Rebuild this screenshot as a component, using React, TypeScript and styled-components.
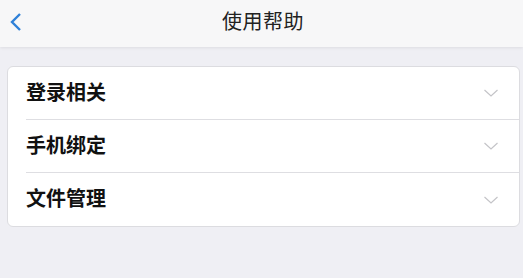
import React from 'react';
import styled, { createGlobalStyle } from 'styled-components';

const GlobalStyle = createGlobalStyle`
  html, body {
    margin: 0;
    padding: 0;
    background: #efeff4;
    font-family: "Noto Sans CJK SC", "Noto Sans", sans-serif;
  }
`;

const Page = styled.div`
  width: 523px;
  height: 278px;
  background: #efeff4;
  overflow: hidden;
`;

const NavBar = styled.div`
  position: relative;
  height: 47px;
  background: #f7f7f8;
  box-shadow: 0 1px 3px rgba(0, 0, 0, 0.08);
  display: flex;
  align-items: center;
  justify-content: center;
`;

const BackButton = styled.button`
  position: absolute;
  left: 6px;
  top: 11px;
  width: 20px;
  height: 22px;
  padding: 0;
  border: none;
  background: none;
  display: flex;
  align-items: center;
  justify-content: center;
`;

const Title = styled.h1`
  margin: 0;
  font-size: 20px;
  font-weight: 400;
  color: #222;
  letter-spacing: 0.5px;
  margin-top: -6px;
  margin-left: 3px;
`;

const Card = styled.div`
  margin: 19px 3px 0 7px;
  background: #fff;
  border: 1px solid #dcdce0;
  border-radius: 6px;
  overflow: hidden;
`;

const Row = styled.div<{ $last?: boolean }>`
  height: 52px;
  margin-left: 18px;
  padding-right: 20px;
  display: flex;
  align-items: center;
  justify-content: space-between;
  border-bottom: ${(p) => (p.$last ? 'none' : '1px solid #dedee2')};
  &:last-child {
    height: 53px;
  }
`;

const Label = styled.span`
  font-size: 20px;
  font-weight: 700;
  color: #111;
  margin-top: -4px;
`;

const Chevron = () => (
  <svg width="16" height="10" viewBox="0 0 16 10">
    <path d="M1.5 2 L8 8 L14.5 2" fill="none" stroke="#c4c4c8" strokeWidth="1.2" />
  </svg>
);

const items = ['登录相关', '手机绑定', '文件管理'];

const App: React.FC = () => {
  return (
    <Page>
      <GlobalStyle />
      <NavBar>
        <BackButton>
          <svg width="14" height="20" viewBox="0 0 14 20">
            <path d="M11 2 L3 10 L11 18" fill="none" stroke="#2f80d8" strokeWidth="2.4" />
          </svg>
        </BackButton>
        <Title>使用帮助</Title>
      </NavBar>
      <Card>
        {items.map((item, i) => (
          <Row key={item} $last={i === items.length - 1}>
            <Label>{item}</Label>
            <Chevron />
          </Row>
        ))}
      </Card>
    </Page>
  );
};

export default App;
